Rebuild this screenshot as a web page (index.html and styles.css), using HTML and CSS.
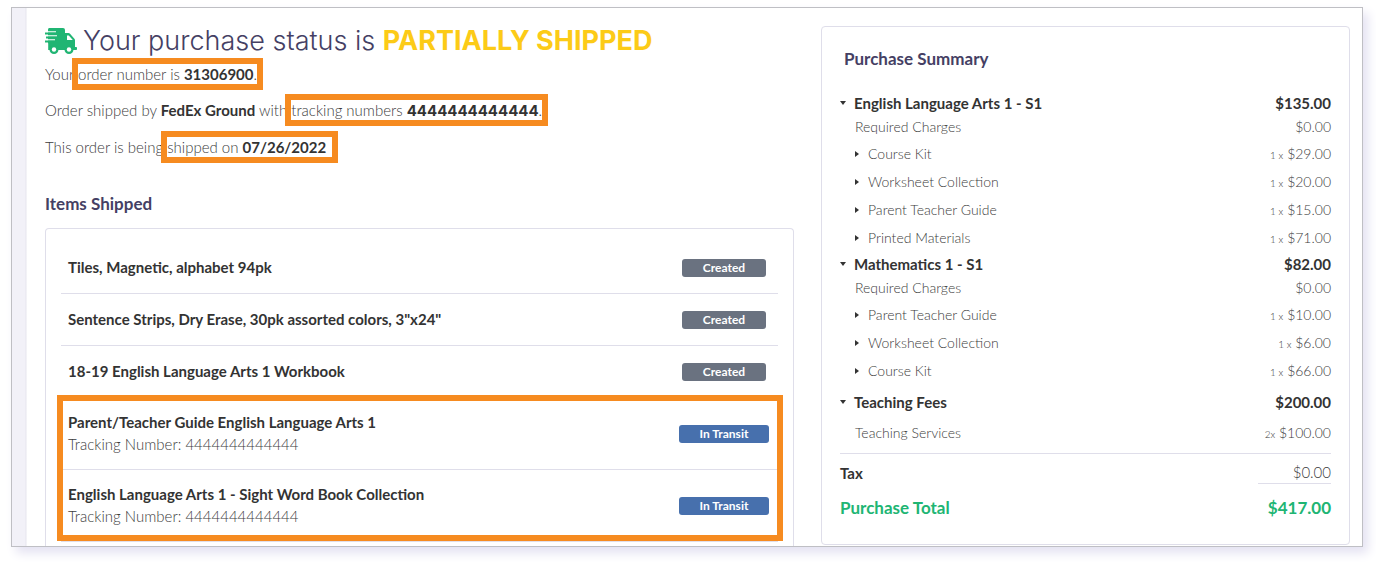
FILE: index.html
```
<!DOCTYPE html>
<html lang="en">
<head>
    <meta charset="UTF-8">
    <meta name="viewport" content="width=device-width, initial-scale=1.0">
    <title>Purchase Status</title>
    <link rel="stylesheet" href="styles.css">
</head>

<body>
    <div class="frame">
        <main class="order">
            <header class="status">
                <svg class="truck" viewBox="0 0 32 26" aria-hidden="true">
                    <path fill="#20b573" d="M4 0h14a2 2 0 0 1 2 2v3h3.500a2 2 0 0 1 1.500.700l4.400 5a2 2 0 0 1 .600 1.500V19h1.200a.800.800 0 0 1 .800.800v1.400a.800.800 0 0 1-.800.800H3V2a2 2 0 0 1 1-2z"/>
                    <path fill="#fff" d="M22 7.500h1.800l4 4.500H22zM0 3.200h11v1.300H0zM0 7.200h12v1.300H0zM0 11.200h10v1.300H0zM0 15.200h3.200v8H0z"/>
                    <path fill="#20b573" d="M0 4.500h11v2H0zM1 8.500h11v2H1zM0 12.500h10v2H0z"/>
                    <circle cx="9" cy="21.500" r="4.500" fill="#20b573"/>
                    <circle cx="24" cy="21.500" r="4.500" fill="#20b573"/>
                    <circle cx="9" cy="21.500" r="2.200" fill="#fff"/>
                    <circle cx="24" cy="21.500" r="2.200" fill="#fff"/>
                </svg>
                <h1>Your purchase status is <strong>PARTIALLY SHIPPED</strong></h1>
            </header>
            <p>Your <span class="mark">order number is <b>31306900</b>.</span></p>
            <p>Order shipped by <b>FedEx Ground</b> with <span class="mark">tracking numbers <b class="number">4444444444444</b>.</span></p>
            <p>This order is being <span class="mark mark-wide">shipped on <b>07/26/2022</b></span></p>

            <h2>Items Shipped</h2>
            <section class="items">
                <div class="item">
                    <div class="item-name">Tiles, Magnetic, alphabet 94pk</div>
                    <div class="item-state"><span class="badge">Created</span></div>
                </div>
                <div class="item">
                    <div class="item-name">Sentence Strips, Dry Erase, 30pk assorted colors, 3"x24"</div>
                    <div class="item-state"><span class="badge">Created</span></div>
                </div>
                <div class="item">
                    <div class="item-name">18-19 English Language Arts 1 Workbook</div>
                    <div class="item-state"><span class="badge">Created</span></div>
                </div>
                <div class="marked-items">
                    <div class="item item-tall">
                        <div class="item-name">Parent/Teacher Guide English Language Arts 1
                            <div class="tracking">Tracking Number: 4444444444444</div>
                        </div>
                        <div class="item-state"><span class="badge transit">In Transit</span></div>
                    </div>
                    <div class="item item-tall">
                        <div class="item-name">English Language Arts 1 - Sight Word Book Collection
                            <div class="tracking">Tracking Number: 4444444444444</div>
                        </div>
                        <div class="item-state"><span class="badge transit">In Transit</span></div>
                    </div>
                </div>
            </section>
        </main>

        <aside class="summary">
            <h2>Purchase Summary</h2>

            <div class="row group"><button class="toggle open">English Language Arts 1 - S1</button><span>$135.00</span></div>
            <div class="row charges"><span>Required Charges</span><span>$0.00</span></div>
            <div class="row line"><button class="toggle">Course Kit</button><span><small>1 x</small> $29.00</span></div>
            <div class="row line"><button class="toggle">Worksheet Collection</button><span><small>1 x</small> $20.00</span></div>
            <div class="row line"><button class="toggle">Parent Teacher Guide</button><span><small>1 x</small> $15.00</span></div>
            <div class="row line"><button class="toggle">Printed Materials</button><span><small>1 x</small> $71.00</span></div>

            <div class="row group"><button class="toggle open">Mathematics 1 - S1</button><span>$82.00</span></div>
            <div class="row charges"><span>Required Charges</span><span>$0.00</span></div>
            <div class="row line"><button class="toggle">Parent Teacher Guide</button><span><small>1 x</small> $10.00</span></div>
            <div class="row line"><button class="toggle">Worksheet Collection</button><span><small>1 x</small> $6.00</span></div>
            <div class="row line"><button class="toggle">Course Kit</button><span><small>1 x</small> $66.00</span></div>

            <div class="row group fees"><button class="toggle open">Teaching Fees</button><span>$200.00</span></div>
            <div class="row charges services"><span>Teaching Services</span><span><small>2x</small> $100.00</span></div>

            <div class="row tax"><b>Tax</b><span class="tax-value">$0.00</span></div>
            <div class="row total"><span>Purchase Total</span><span>$417.00</span></div>
        </aside>
    </div>
</body>
</html>
```

FILE: styles.css
```
* {
    box-sizing: border-box;
}

body {
    font-family: Lato, "Liberation Sans", sans-serif;
    font-size: 15px;
    font-weight: 300;
    line-height: 20px;
    margin: 0;
    background-color: #fff;
    color: #3c3c3c;
}

b {
    color: #333;
    font-weight: 700;
}

.number {
    font-family: Inter, sans-serif;
}

.frame {
    display: grid;
    grid-template-columns: 764fr 529fr;
    gap: 27px;
    margin: 7px 13px 16px 11px;
    padding: 18px 12px 0 18px;
    border: 1px solid #bfbfc4;
    box-shadow: 5px 6px 10px #e4e2f2;
    background: linear-gradient(to right, #f2f1f8 13px, #e6e5ee 14px, #fff 15px);
}

.order {
    padding-left: 15px;
}

.status {
    display: flex;
    align-items: center;
    gap: 6px;
    height: 30px;
    margin-bottom: 8px;
}

.truck {
    width: 32px;
    height: 26px;
    flex: none;
}

h1 {
    margin: 0;
    font-family: Inter, sans-serif;
    font-size: 27px;
    font-weight: 300;
    line-height: 30px;
    color: #453f64;
    white-space: nowrap;
}

h1 strong {
    font-weight: 700;
    color: #fccb17;
}

p {
    margin: 0 0 16px;
}

.mark {
    padding: 1px 0;
    outline: 6px solid #f68b20;
}

.mark-wide {
    padding-right: 6px;
}

h2 {
    margin: 0;
    font-size: 17px;
    font-weight: 700;
    line-height: 20px;
    color: #453f64;
}

.order h2 {
    margin-top: 37px;
}

.items {
    margin-top: 14px;
    padding: 13px 15px 4px;
    border: 1px solid #dfdeea;
    border-bottom: 0;
    border-radius: 4px 4px 0 0;
}

.item {
    display: flex;
    align-items: center;
    justify-content: space-between;
    height: 52px;
    padding: 0 8px 2px 7px;
    border-bottom: 1px solid #dfdeea;
}

.item-tall {
    height: 72px;
}

.item-name {
    font-weight: 700;
    line-height: 22px;
    color: #333;
}

.tracking {
    font-weight: 300;
    color: #3c3c3c;
}

.item-state {
    width: 92px;
    text-align: center;
}

.badge {
    display: inline-block;
    padding: 0 21px;
    border-radius: 3px;
    background-color: #6a7280;
    color: #fff;
    font-size: 12px;
    font-weight: 700;
    line-height: 18px;
    white-space: nowrap;
}

.transit {
    background-color: #4770ad;
}

/* highlight round the items in transit */
.marked-items {
    position: relative;
}

.marked-items::after {
    content: "";
    position: absolute;
    inset: -3px -5px 1px -4px;
    border: 6px solid #f68b20;
    pointer-events: none;
}

.summary {
    margin-bottom: 1px;
    padding: 22px 18px 14px;
    border: 1px solid #dfdeea;
    border-radius: 4px;
}

.summary h2 {
    margin: 0 0 22px 4px;
}

.row {
    display: flex;
    align-items: center;
    justify-content: space-between;
    height: 28px;
    font-size: 14px;
}

.toggle {
    display: flex;
    align-items: center;
    gap: 9px;
    padding: 0;
    border: none;
    background: none;
    color: inherit;
    font: inherit;
    cursor: pointer;
}

.toggle::before {
    content: "";
    border: 3px solid transparent;
    border-left: 4px solid #333;
    border-right: 0;
}

.toggle.open::before {
    border: 3px solid transparent;
    border-top: 4px solid #333;
    border-bottom: 0;
}

.toggle.open {
    gap: 8px;
}

small {
    font-size: 10px;
}

.group {
    height: 23px;
    font-size: 15px;
    font-weight: 700;
    color: #333;
}

.charges {
    height: 26px;
    padding-left: 15px;
}

.line {
    padding-left: 15px;
}

.fees {
    margin-top: 5px;
}

.services {
    height: 40px;
}

.tax {
    height: 38px;
    border-top: 1px solid #dfdeea;
    font-size: 15px;
}

.tax-value {
    width: 73px;
    border-bottom: 1px solid #dfdeea;
    line-height: 22px;
    text-align: right;
}

.total {
    height: 34px;
    font-size: 17px;
    font-weight: 700;
    color: #20b573;
}
```
